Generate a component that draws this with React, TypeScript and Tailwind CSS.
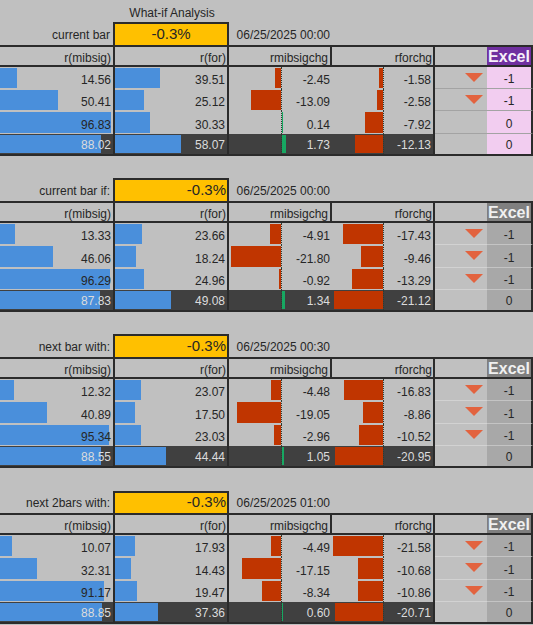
type Row = { a: number; b: number; c: number; d: number; e: number }

type Section = {
  label: string
  pct: string
  center?: boolean
  date: string
  purple?: boolean
  rows: Row[]
}

const sections: Section[] = [
  {
    label: 'current bar',
    pct: '-0.3%',
    center: true,
    date: '06/25/2025 00:00',
    purple: true,
    rows: [
      { a: 14.56, b: 39.51, c: -2.45, d: -1.58, e: -1 },
      { a: 50.41, b: 25.12, c: -13.09, d: -2.58, e: -1 },
      { a: 96.83, b: 30.33, c: 0.14, d: -7.92, e: 0 },
      { a: 88.02, b: 58.07, c: 1.73, d: -12.13, e: 0 },
    ],
  },
  {
    label: 'current bar if:',
    pct: '-0.3%',
    date: '06/25/2025 00:00',
    rows: [
      { a: 13.33, b: 23.66, c: -4.91, d: -17.43, e: -1 },
      { a: 46.06, b: 18.24, c: -21.8, d: -9.46, e: -1 },
      { a: 96.29, b: 24.96, c: -0.92, d: -13.29, e: -1 },
      { a: 87.83, b: 49.08, c: 1.34, d: -21.12, e: 0 },
    ],
  },
  {
    label: 'next bar with:',
    pct: '-0.3%',
    date: '06/25/2025 00:30',
    rows: [
      { a: 12.32, b: 23.07, c: -4.48, d: -16.83, e: -1 },
      { a: 40.89, b: 17.5, c: -19.05, d: -8.86, e: -1 },
      { a: 95.34, b: 23.03, c: -2.96, d: -10.52, e: -1 },
      { a: 88.55, b: 44.44, c: 1.05, d: -20.95, e: 0 },
    ],
  },
  {
    label: 'next 2bars with:',
    pct: '-0.3%',
    date: '06/25/2025 01:00',
    rows: [
      { a: 10.07, b: 17.93, c: -4.49, d: -21.58, e: -1 },
      { a: 32.31, b: 14.43, c: -17.15, d: -10.68, e: -1 },
      { a: 91.17, b: 19.47, c: -8.34, d: -10.86, e: -1 },
      { a: 88.85, b: 37.36, c: 0.6, d: -20.71, e: 0 },
    ],
  },
]

// data bar scales, px per unit
const BLUE = 1.143
const RED = 2.3

function BlueCell({ v, dark, width }: { v: number; dark: boolean; width: string }) {
  return (
    <div
      className={`relative ${width} shrink-0 flex items-end justify-end pr-[2px] pb-[2px] border-r-2 border-[#2b2b2b] ${
        dark ? 'bg-[#404040] text-[#dcdcdc]' : ''
      }`}
    >
      <div className="absolute left-0 top-[1px] bottom-[1px] bg-[#4a8fdb]" style={{ width: v * BLUE }} />
      <span className="relative leading-[14px]">{v.toFixed(2)}</span>
    </div>
  )
}

function ChgCell({ v, dark, axis, width, border }: { v: number; dark: boolean; axis: number; width: string; border: boolean }) {
  const w = Math.abs(v) * RED
  return (
    <div
      className={`relative ${width} shrink-0 flex items-end justify-end pr-[2px] pb-[2px] ${
        border ? 'border-r-2 border-[#2b2b2b]' : ''
      } ${dark ? 'bg-[#404040] text-[#dcdcdc]' : ''}`}
    >
      {v < 0 ? (
        <div className="absolute top-[1px] bottom-[1px] bg-[#c03500]" style={{ left: axis - w, width: w }} />
      ) : (
        <div className="absolute top-[1px] bottom-[1px] bg-[#17a862]" style={{ left: axis + 1, width: w }} />
      )}
      <div className="absolute top-0 bottom-0 w-0 border-l border-dotted border-[#2f3a2f]" style={{ left: axis }} />
      <span className="relative leading-[14px]">{v.toFixed(2)}</span>
    </div>
  )
}

function Arrow() {
  return (
    <svg width="18" height="9" viewBox="0 0 18 9">
      <polygon points="0,0 18,0 9,9" fill="#e2633f" />
    </svg>
  )
}

function Block({ s }: { s: Section }) {
  return (
    <>
      {/* input row */}
      <div className="flex h-[22.3px]">
        <div className="w-[115px] shrink-0 flex items-end justify-end pr-[3px] pb-[3px] border-r-2 border-[#2b2b2b]">
          <span className="leading-[14px]">{s.label}</span>
        </div>
        <div
          className={`w-[114px] shrink-0 flex items-end pb-[3px] bg-[#ffc000] border-t-2 border-r-2 border-[#2b2b2b] text-[15px] ${
            s.center ? 'justify-center' : 'justify-end pr-[1px]'
          }`}
        >
          <span className="leading-[16px]">{s.pct}</span>
        </div>
        <div className="w-[103px] shrink-0 flex items-end justify-end pr-[2px] pb-[3px]">
          <span className="leading-[14px] whitespace-nowrap">{s.date}</span>
        </div>
      </div>

      {/* header row */}
      <div className="flex h-[22.3px] border-y-2 border-[#2b2b2b]">
        <div className="w-[115px] shrink-0 flex items-end justify-end pr-[2px] border-r-2 border-[#2b2b2b]">
          <span className="leading-[14px]">r(mibsig)</span>
        </div>
        <div className="w-[114px] shrink-0 flex items-end justify-end pr-[1px] border-r-2 border-[#2b2b2b]">
          <span className="leading-[14px]">r(for)</span>
        </div>
        <div className="w-[103px] shrink-0 flex items-end justify-end pr-[2px] border-r-2 border-[#2b2b2b]">
          <span className="leading-[14px]">rmibsigchg</span>
        </div>
        <div className="w-[103px] shrink-0 flex items-end justify-end pr-[1px] border-r-2 border-[#2b2b2b]">
          <span className="leading-[14px]">rforchg</span>
        </div>
        <div className="w-[52px] shrink-0" />
        <div
          className={`w-[46px] shrink-0 flex items-end justify-center border-r-2 border-[#2b2b2b] font-bold text-[16px] ${
            s.purple ? 'bg-[#7030a0] text-[#f6f0fa]' : 'bg-[#7f7f7f] text-[#f0f0f0]'
          }`}
        >
          <span className="leading-[17px]">Excel</span>
        </div>
      </div>

      {/* data rows */}
      {s.rows.map((r, i) => {
        const last = i === s.rows.length - 1
        return (
          <div key={i} className={`flex h-[22.3px] ${last ? 'border-b-2 border-[#2b2b2b]' : ''}`}>
            <BlueCell v={r.a} dark={last} width="w-[115px]" />
            <BlueCell v={r.b} dark={last} width="w-[114px]" />
            <ChgCell v={r.c} dark={last} axis={52} width="w-[103px]" border={false} />
            <ChgCell v={r.d} dark={last} axis={51} width="w-[103px]" border />
            <div
              className={`w-[52px] shrink-0 flex items-start justify-end pr-[4px] pt-[6px] ${
                last ? '' : s.purple ? 'border-b border-[#a3a3a3]' : 'border-b border-[#d2d2d2]'
              }`}
            >
              {r.e < 0 && <Arrow />}
            </div>
            <div
              className={`w-[46px] shrink-0 flex items-end justify-center pb-[2px] border-r-2 border-[#2b2b2b] ${
                s.purple ? 'bg-[#f2cdf0]' : 'bg-[#a8a8a8]'
              } ${last ? '' : s.purple ? 'border-b border-b-[#a3a3a3]' : 'border-b border-b-[#c4c4c4]'}`}
            >
              <span className="leading-[14px]">{r.e}</span>
            </div>
          </div>
        )
      })}
    </>
  )
}

export default function App() {
  return (
    <div className="w-[533px] h-[625px] overflow-hidden bg-[#c0c0c0] text-[#262626] text-[12px] font-['Liberation_Sans',Arial,sans-serif]">
      <div className="flex h-[22.3px]">
        <div className="w-[115px] shrink-0" />
        <div className="w-[114px] shrink-0 flex items-end justify-center pb-[2px]">
          <span className="leading-[14px] whitespace-nowrap">What-if Analysis</span>
        </div>
      </div>
      {sections.map((s, i) => (
        <div key={i}>
          {i > 0 && <div className="h-[22.3px]" />}
          <Block s={s} />
        </div>
      ))}
    </div>
  )
}
